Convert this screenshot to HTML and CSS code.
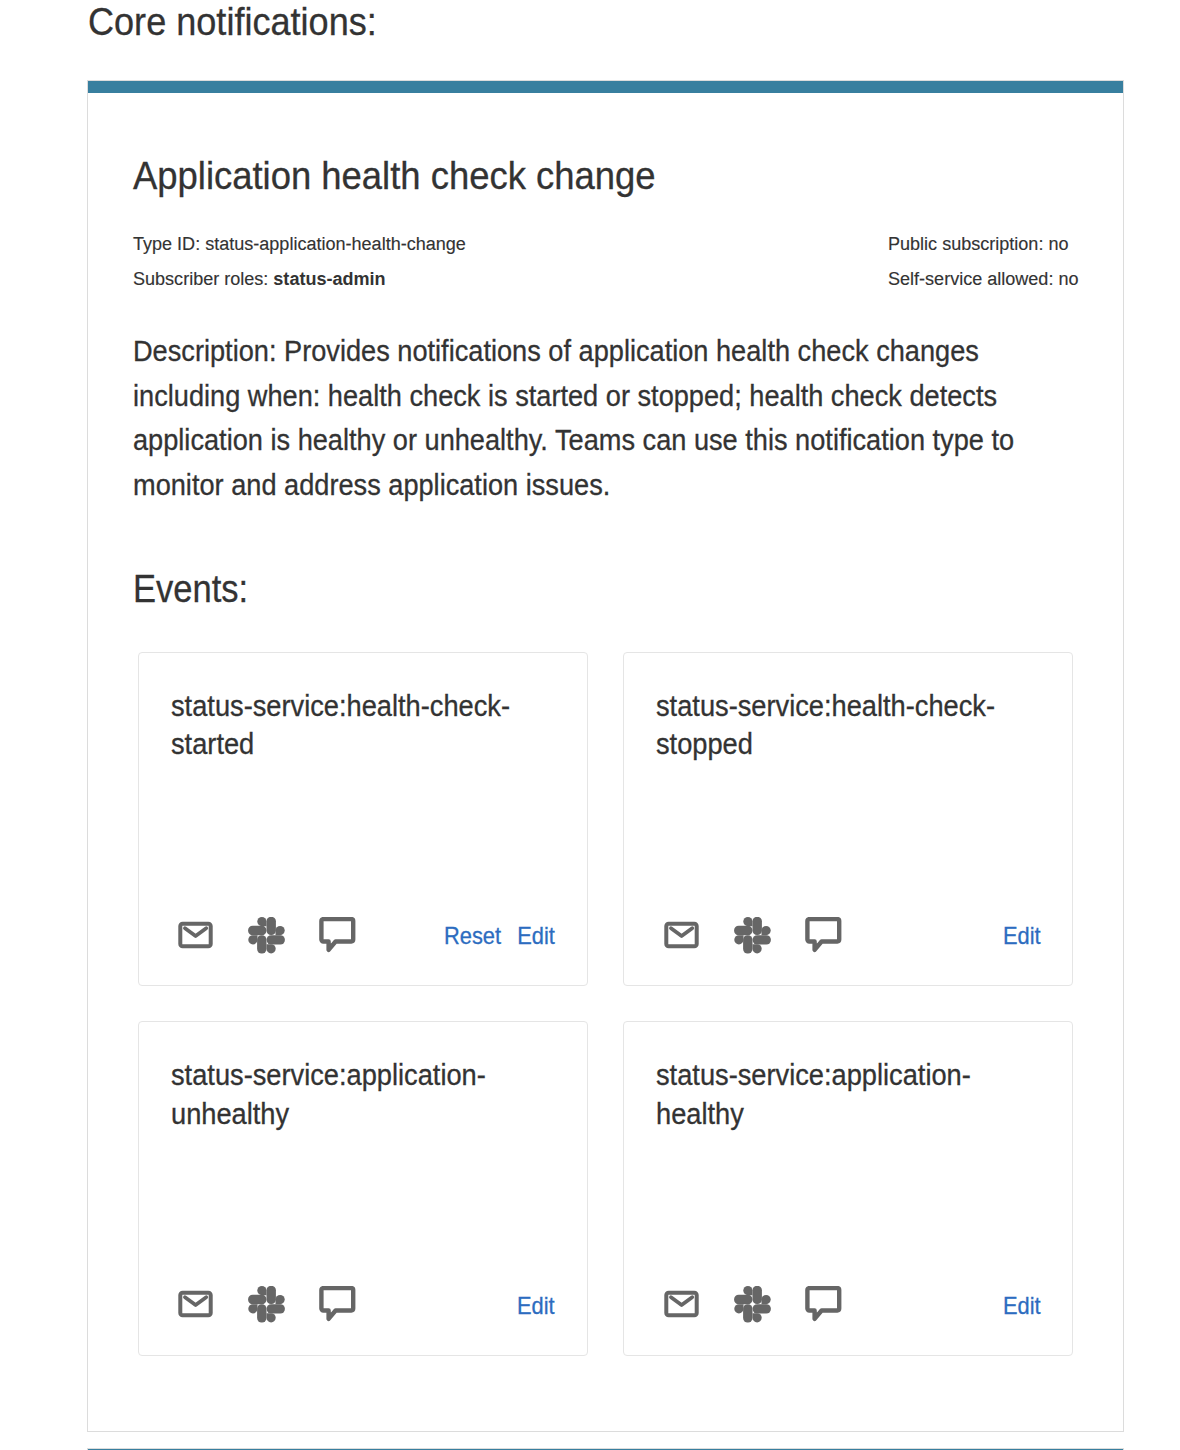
FILE: index.html
```html
<!DOCTYPE html>
<html lang="en">
<head>
<meta charset="utf-8">
<title>Core notifications</title>
<link rel="stylesheet" href="styles.css">
</head>
<body>
<svg class="sprite" aria-hidden="true">
  <symbol id="mail" viewBox="0 0 37 37">
    <rect x="3.3" y="6.7" width="30.4" height="22.6" rx="2.3" fill="none" stroke="currentColor" stroke-width="4"/>
    <path d="M8 11.2 18.6 19 29.2 11.2" fill="none" stroke="currentColor" stroke-width="3.8" stroke-linecap="round" stroke-linejoin="round"/>
  </symbol>
  <g id="slack-arm">
    <rect x="0" y="-18.4" width="9.4" height="18.3" rx="4.5"/>
    <path d="M0-9V-13.6a4.6 4.6 0 1 0-4.6 4.6z"/>
  </g>
  <symbol id="slack" viewBox="0 0 37 37">
    <g fill="currentColor" transform="translate(18.5 18.2)">
      <use href="#slack-arm"/>
      <use href="#slack-arm" transform="rotate(90)"/>
      <use href="#slack-arm" transform="rotate(180)"/>
      <use href="#slack-arm" transform="rotate(270)"/>
    </g>
  </symbol>
  <symbol id="chat" viewBox="0 0 37 37">
    <path d="M4.3 2.1H32.3a1.9 1.9 0 0 1 1.9 1.9V22.6a1.9 1.9 0 0 1-1.9 1.9H16.6L9.6 32.8V24.5H4.3a1.9 1.9 0 0 1-1.9-1.9V4a1.9 1.9 0 0 1 1.9-1.9z" fill="none" stroke="currentColor" stroke-width="4.4" stroke-linejoin="round"/>
    <path d="M9.6 26.5V32.8L15 26.5z" fill="currentColor"/>
  </symbol>
</svg>
<main class="page">
  <h2 class="heading page-heading">Core notifications:</h2>
  <section class="panel">
    <div class="panel-body">
      <h2 class="heading">Application health check change</h2>
      <div class="meta">
        <div class="meta-col">
          <div class="meta-line">Type ID: status-application-health-change</div>
          <div class="meta-line">Subscriber roles: <b>status-admin</b></div>
        </div>
        <div class="meta-col meta-flags">
          <div class="meta-line">Public subscription: no</div>
          <div class="meta-line">Self-service allowed: no</div>
        </div>
      </div>
      <p class="description">Description: Provides notifications of application health check changes<br>including when: health check is started or stopped; health check detects<br>application is healthy or unhealthy. Teams can use this notification type to<br>monitor and address application issues.</p>
      <h2 class="heading events-heading">Events:</h2>
      <div class="events">
        <article class="event">
          <h3 class="event-name">status-service:health-check-<br>started</h3>
          <footer class="event-footer">
            <div class="channels"><svg class="icon"><use href="#mail"/></svg><svg class="icon"><use href="#slack"/></svg><svg class="icon"><use href="#chat"/></svg></div>
            <div class="actions"><a class="link">Reset</a><a class="link">Edit</a></div>
          </footer>
        </article>
        <article class="event">
          <h3 class="event-name">status-service:health-check-<br>stopped</h3>
          <footer class="event-footer">
            <div class="channels"><svg class="icon"><use href="#mail"/></svg><svg class="icon"><use href="#slack"/></svg><svg class="icon"><use href="#chat"/></svg></div>
            <div class="actions"><a class="link">Edit</a></div>
          </footer>
        </article>
        <article class="event">
          <h3 class="event-name">status-service:application-<br>unhealthy</h3>
          <footer class="event-footer">
            <div class="channels"><svg class="icon"><use href="#mail"/></svg><svg class="icon"><use href="#slack"/></svg><svg class="icon"><use href="#chat"/></svg></div>
            <div class="actions"><a class="link">Edit</a></div>
          </footer>
        </article>
        <article class="event">
          <h3 class="event-name">status-service:application-<br>healthy</h3>
          <footer class="event-footer">
            <div class="channels"><svg class="icon"><use href="#mail"/></svg><svg class="icon"><use href="#slack"/></svg><svg class="icon"><use href="#chat"/></svg></div>
            <div class="actions"><a class="link">Edit</a></div>
          </footer>
        </article>
      </div>
    </div>
  </section>
  <section class="panel"></section>
</main>
</body>
</html>
```
FILE: styles.css
```css
* { box-sizing: border-box; }

body {
  margin: 0;
  background: #fff;
  color: #333;
  font-family: "Liberation Sans", Arial, sans-serif;
  -webkit-text-stroke: 0.3px currentColor;
}

.sprite { display: none; }

.page {
  height: 1450px;
  padding: 0 56px 0 87px;
  overflow: hidden;
}

/* Text is set slightly condensed */
.heading,
.meta-line,
.description,
.event-name {
  transform: scaleX(0.939);
  transform-origin: left;
  white-space: nowrap;
}

.heading {
  margin: 0;
  font-size: 38.8px;
  font-weight: 400;
  line-height: 44px;
}

.page-heading { transform: translateX(1px) scaleX(0.93); }

.events-heading { transform: scaleX(0.89); }

.panel {
  height: 1352px;
  margin: 36px 0 16px;
  border: 1px solid #dcdcdc;
}

.panel + .panel { margin-top: 0; }

.panel::before {
  content: "";
  display: block;
  height: 12px;
  background: #387f9f;
}

.panel-body { padding: 61px 45px 0; }

.meta {
  display: flex;
  justify-content: space-between;
  margin-top: 28px;
  font-size: 19.2px;
  line-height: 35px;
  -webkit-text-stroke-width: 0.15px;
}

.meta-line { transform: scaleX(0.94); }

.meta-line b { -webkit-text-stroke-width: 0; }

.meta-flags { width: 190px; }

.description {
  margin: 33px 0 59px;
  font-size: 29px;
  line-height: 44.7px;
}

.description { transform: scaleX(0.937); }

.events {
  display: grid;
  grid-template-columns: 450px 450px;
  grid-auto-rows: 334.4px;
  gap: 35px 35.4px;
  margin: 41px 5px 0;
}

.event {
  display: flex;
  flex-direction: column;
  justify-content: space-between;
  padding: 34px 32px 30px;
  border: 1px solid #e5e5e5;
  border-radius: 4px;
}

.event-name {
  margin: 0;
  font-size: 29px;
  font-weight: 400;
  line-height: 38.4px;
}

.event-footer {
  display: flex;
  align-items: center;
  justify-content: space-between;
  height: 40px;
}

.channels {
  display: flex;
  gap: 34px;
  margin-left: 6px;
  color: #666;
}

.event:nth-child(even) .channels { margin-left: 7px; }

.icon {
  display: block;
  width: 37px;
  height: 37px;
}

.actions {
  display: flex;
  gap: 17.5px;
  padding-top: 2px;
  transform: scaleX(0.925);
  transform-origin: right;
}

.link {
  color: #2c6cc0;
  font-size: 23.6px;
  line-height: 34px;
}
```
